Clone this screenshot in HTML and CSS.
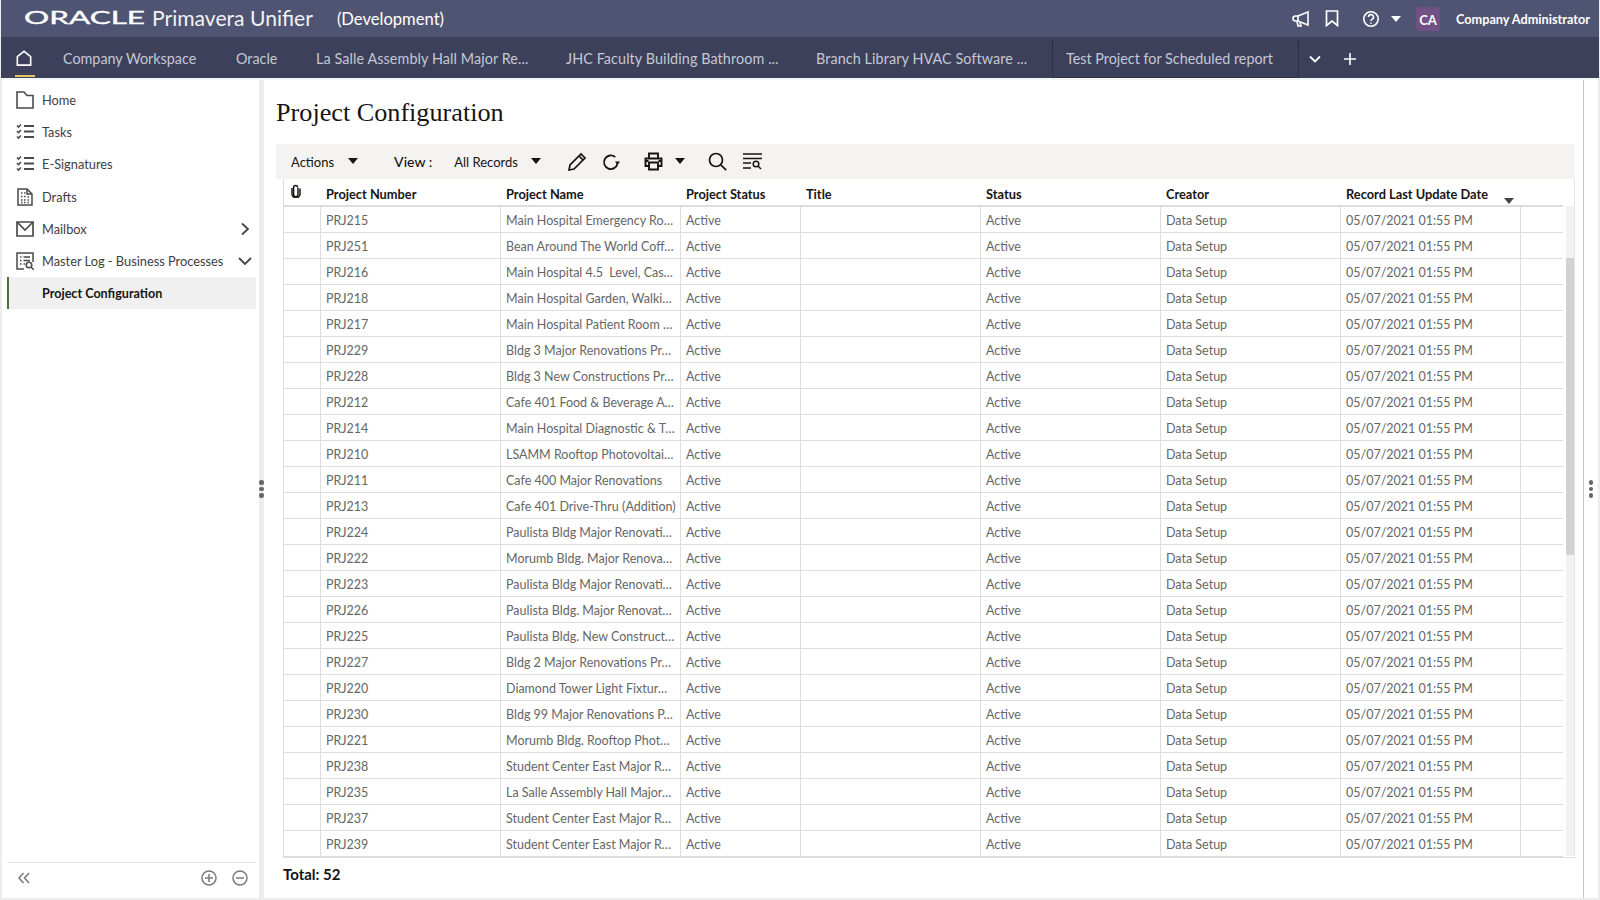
FILE: index.html
```html
<!DOCTYPE html>
<html lang="en">
<head>
<meta charset="utf-8">
<title>Project Configuration</title>
<link rel="stylesheet" href="styles.css">
</head>
<body>
<div class="app">
  <header class="topbar">
    <svg class="oracle" width="124" height="26" viewBox="0 0 124 26"><text x="0" y="19" textLength="121" lengthAdjust="spacingAndGlyphs" class="oracle-text">ORACLE</text></svg>
    <span class="product">Primavera Unifier</span>
    <span class="env">(Development)</span>
    <div class="top-actions">
      <svg class="ico-mega" width="18" height="18" viewBox="0 0 18 18" fill="none" stroke="#fff" stroke-width="1.6"><path d="M16 2v13L6 11H3.5a2.3 2.3 0 0 1 0-5H6z"/><path d="M6 6v5"/><path d="M5 11.5l1 4.5h3l-1-3.500"/></svg>
      <svg class="ico-mark" width="14" height="17" viewBox="0 0 14 17" fill="none" stroke="#fff" stroke-width="1.700"><path d="M1.500 1h11v14.500L7 11l-5.500 4.500z"/></svg>
      <svg class="ico-help" width="18" height="18" viewBox="0 0 18 18" fill="none" stroke="#fff" stroke-width="1.600"><circle cx="9" cy="9" r="7.200"/><path d="M6.500 7a2.500 2.400 0 1 1 3.700 2.100c-.9.500-1.200 1-1.200 2"/><path d="M9 12.400v1.400"/></svg>
      <span class="caret caret-white"></span>
      <span class="avatar">CA</span>
      <span class="username">Company Administrator</span>
    </div>
  </header>

  <nav class="tabs">
    <div class="home-tab">
      <svg width="16" height="16" viewBox="0 0 18 18" fill="none" stroke="#fff" stroke-width="1.800"><path d="M1.500 7.500L9 1.500l7.500 6V17h-15z"/></svg>
    </div>
    <div class="tab tab-w1">Company Workspace</div>
    <div class="tab tab-w2">Oracle</div>
    <div class="tab tab-w3">La Salle Assembly Hall Major Re...</div>
    <div class="tab tab-w3">JHC Faculty Building Bathroom ...</div>
    <div class="tab tab-w3">Branch Library HVAC Software ...</div>
    <div class="tab tab-w4 tab-active">Test Project for Scheduled report</div>
    <svg class="tab-more" width="12" height="8" viewBox="0 0 12 8" fill="none" stroke="#fff" stroke-width="1.800"><path d="M1 1.500l5 5 5-5"/></svg>
    <svg class="tab-add" width="14" height="14" viewBox="0 0 14 14" fill="none" stroke="#fff" stroke-width="1.600"><path d="M7 1v12M1 7h12"/></svg>
  </nav>

  <main class="main">
    <aside class="sidebar">
      <ul class="side-nav">
        <li class="side-item">
          <svg class="side-ico" width="18" height="18" viewBox="0 0 18 18" fill="none" stroke="#4a4a4a" stroke-width="1.600"><path d="M1 1h7l3 3.500h6V17H1z"/></svg>
          <span>Home</span>
        </li>
        <li class="side-item">
          <svg class="side-ico" width="18" height="18" viewBox="0 0 18 18" fill="none" stroke="#4a4a4a" stroke-width="1.600"><path d="M1 2.500l1.500 1.500L5 1.500M1 8l1.500 1.500L5 7M1 13.500L2.500 15 5 12.500"/><path d="M8 3h10M8 8.500h10M8 14h10" stroke-width="1.800"/></svg>
          <span>Tasks</span>
        </li>
        <li class="side-item">
          <svg class="side-ico" width="18" height="18" viewBox="0 0 18 18" fill="none" stroke="#4a4a4a" stroke-width="1.600"><path d="M1 2.500l1.500 1.500L5 1.500M1 8l1.500 1.500L5 7M1 13.500L2.500 15 5 12.500"/><path d="M8 3h10M8 8.500h10M8 14h10" stroke-width="1.800"/></svg>
          <span>E-Signatures</span>
        </li>
        <li class="side-item">
          <svg class="side-ico" width="18" height="18" viewBox="0 0 18 18" fill="none" stroke="#4a4a4a" stroke-width="1.500"><path d="M2 1h9l5 5v11H2z"/><path d="M11 1v5h5"/><path d="M5 5h1.500M8 5h1.500M5 8.500h1.500M8 8.500h1.500M11.500 9h1.500M5 12h1.500M8 12h1.500M11.500 12h1.500M5 14.500h1.500M8 14.500h1.500M11.500 14.500h1.500" stroke-width="1.300"/></svg>
          <span>Drafts</span>
        </li>
        <li class="side-item">
          <svg class="side-ico" width="18" height="18" viewBox="0 0 18 18" fill="none" stroke="#4a4a4a" stroke-width="1.700"><path d="M1 2h16v14H1z"/><path d="M1.500 2.500L9 10l7.500-7.500"/></svg>
          <span>Mailbox</span>
          <svg class="side-chev chev-right" width="10" height="14" viewBox="0 0 10 14" fill="none" stroke="#444" stroke-width="1.800"><path d="M2 1.500L8 7l-6 5.500"/></svg>
        </li>
        <li class="side-item">
          <svg class="side-ico" width="18" height="18" viewBox="0 0 18 18" fill="none" stroke="#4a4a4a" stroke-width="1.500"><path d="M8 17H1V1h16v9"/><path d="M4 5h1.500M7.500 5H14M4 8.500h1.500M7.500 8.500H14M4 12h1.500M7.500 12H9"/><circle cx="13" cy="13" r="2.800"/><path d="M15 15l3 3"/></svg>
          <span>Master Log - Business Processes</span>
          <svg class="side-chev chev-down" width="14" height="10" viewBox="0 0 14 10" fill="none" stroke="#444" stroke-width="1.800"><path d="M1 2l6 6 6-6"/></svg>
        </li>
        <li class="side-item side-selected"><span>Project Configuration</span></li>
      </ul>
      <div class="side-foot">
        <svg class="foot-collapse" width="12" height="12" viewBox="0 0 12 12" fill="none" stroke="#7a7a7a" stroke-width="1.600"><path d="M5.500 1L1 6l4.500 5M11 1L6.500 6l4.500 5"/></svg>
        <svg class="foot-plus" width="16" height="16" viewBox="0 0 16 16" fill="none" stroke="#7a7a7a" stroke-width="1.500"><circle cx="8" cy="8" r="7"/><path d="M8 4v8M4 8h8"/></svg>
        <svg class="foot-minus" width="16" height="16" viewBox="0 0 16 16" fill="none" stroke="#7a7a7a" stroke-width="1.500"><circle cx="8" cy="8" r="7"/><path d="M4 8h8"/></svg>
      </div>
    </aside>

    <div class="splitter"><i></i><i></i><i></i></div>

    <section class="panel">
      <h1 class="title">Project Configuration</h1>
      <div class="toolbar">
        <span class="tb-actions">Actions</span>
        <span class="caret caret-dark tb-caret1"></span>
        <span class="tb-view">View :</span>
        <span class="tb-records">All Records</span>
        <span class="caret caret-dark tb-caret2"></span>
        <svg class="tb-pencil" width="20" height="20" viewBox="0 0 20 20" fill="none" stroke="#161513" stroke-width="1.700"><path d="M2 18l1-5L14 2l4 4L7 17z"/><path d="M12 4l4 4"/></svg>
        <svg class="tb-refresh" width="19" height="18" viewBox="0 0 19 18" fill="none" stroke="#161513" stroke-width="1.800"><path d="M15.500 10.500A6.800 6.800 0 1 1 13.200 4"/><path d="M18 8.500h-5l2.500 3.500z" fill="#161513" stroke="none"/></svg>
        <svg class="tb-print" width="19" height="19" viewBox="0 0 19 19" fill="none" stroke="#161513" stroke-width="1.900"><path d="M5 6V1.500h9V6"/><path d="M5 14H1.500V6.500h16V14H14"/><path d="M5 10.500h9v7H5z"/><path d="M1.500 9h3M14.500 9h3"/></svg>
        <span class="caret caret-dark tb-caret3"></span>
        <svg class="tb-search" width="19" height="19" viewBox="0 0 19 19" fill="none" stroke="#161513" stroke-width="1.700"><circle cx="8" cy="8" r="6.500"/><path d="M12.800 12.800l5.400 5.400"/></svg>
        <svg class="tb-filter" width="19" height="17" viewBox="0 0 19 17" fill="none" stroke="#161513" stroke-width="1.500"><path d="M0 1h19M0 5.500h19M0 10h8M0 15h8"/><circle cx="13" cy="11" r="2.800"/><path d="M15 13l3 3"/></svg>
      </div>
      <div class="grid">
        <div class="grid-scroll">
          <table class="data">
            <colgroup>
              <col class="c-clip"><col class="c-wide"><col class="c-wide"><col class="c-status"><col class="c-wide"><col class="c-wide"><col class="c-wide"><col class="c-wide"><col class="c-end">
            </colgroup>
            <thead>
              <tr>
                <th class="clip-head"><svg width="10" height="14" viewBox="0 0 10 14" fill="none" stroke="#161513" stroke-width="1.500"><path d="M7 4v6.500a2.200 2.200 0 0 1-4.400 0V3.500a2 2 0 0 1 4 0"/><path d="M9 4.500v5.500a4 4 0 0 1-8 0V4"/></svg></th>
                <th>Project Number</th><th>Project Name</th><th>Project Status</th><th>Title</th><th>Status</th><th>Creator</th>
                <th class="sort-head">Record Last Update Date<span class="caret caret-sort"></span></th><th></th>
              </tr>
            </thead>
            <tbody>
              <tr><td></td><td>PRJ215</td><td>Main Hospital Emergency Ro…</td><td>Active</td><td></td><td>Active</td><td>Data Setup</td><td>05/07/2021 01:55 PM</td><td></td></tr>
              <tr><td></td><td>PRJ251</td><td>Bean Around The World Coff…</td><td>Active</td><td></td><td>Active</td><td>Data Setup</td><td>05/07/2021 01:55 PM</td><td></td></tr>
              <tr><td></td><td>PRJ216</td><td>Main Hospital 4.5 &nbsp;Level, Cas…</td><td>Active</td><td></td><td>Active</td><td>Data Setup</td><td>05/07/2021 01:55 PM</td><td></td></tr>
              <tr><td></td><td>PRJ218</td><td>Main Hospital Garden, Walki…</td><td>Active</td><td></td><td>Active</td><td>Data Setup</td><td>05/07/2021 01:55 PM</td><td></td></tr>
              <tr><td></td><td>PRJ217</td><td>Main Hospital Patient Room …</td><td>Active</td><td></td><td>Active</td><td>Data Setup</td><td>05/07/2021 01:55 PM</td><td></td></tr>
              <tr><td></td><td>PRJ229</td><td>Bldg 3 Major Renovations Pr…</td><td>Active</td><td></td><td>Active</td><td>Data Setup</td><td>05/07/2021 01:55 PM</td><td></td></tr>
              <tr><td></td><td>PRJ228</td><td>Bldg 3 New Constructions Pr…</td><td>Active</td><td></td><td>Active</td><td>Data Setup</td><td>05/07/2021 01:55 PM</td><td></td></tr>
              <tr><td></td><td>PRJ212</td><td>Cafe 401 Food &amp; Beverage A…</td><td>Active</td><td></td><td>Active</td><td>Data Setup</td><td>05/07/2021 01:55 PM</td><td></td></tr>
              <tr><td></td><td>PRJ214</td><td>Main Hospital Diagnostic &amp; T…</td><td>Active</td><td></td><td>Active</td><td>Data Setup</td><td>05/07/2021 01:55 PM</td><td></td></tr>
              <tr><td></td><td>PRJ210</td><td>LSAMM Rooftop Photovoltai…</td><td>Active</td><td></td><td>Active</td><td>Data Setup</td><td>05/07/2021 01:55 PM</td><td></td></tr>
              <tr><td></td><td>PRJ211</td><td>Cafe 400 Major Renovations</td><td>Active</td><td></td><td>Active</td><td>Data Setup</td><td>05/07/2021 01:55 PM</td><td></td></tr>
              <tr><td></td><td>PRJ213</td><td>Cafe 401 Drive-Thru (Addition)</td><td>Active</td><td></td><td>Active</td><td>Data Setup</td><td>05/07/2021 01:55 PM</td><td></td></tr>
              <tr><td></td><td>PRJ224</td><td>Paulista Bldg Major Renovati…</td><td>Active</td><td></td><td>Active</td><td>Data Setup</td><td>05/07/2021 01:55 PM</td><td></td></tr>
              <tr><td></td><td>PRJ222</td><td>Morumb Bldg. Major Renova…</td><td>Active</td><td></td><td>Active</td><td>Data Setup</td><td>05/07/2021 01:55 PM</td><td></td></tr>
              <tr><td></td><td>PRJ223</td><td>Paulista Bldg Major Renovati…</td><td>Active</td><td></td><td>Active</td><td>Data Setup</td><td>05/07/2021 01:55 PM</td><td></td></tr>
              <tr><td></td><td>PRJ226</td><td>Paulista Bldg. Major Renovat…</td><td>Active</td><td></td><td>Active</td><td>Data Setup</td><td>05/07/2021 01:55 PM</td><td></td></tr>
              <tr><td></td><td>PRJ225</td><td>Paulista Bldg. New Construct…</td><td>Active</td><td></td><td>Active</td><td>Data Setup</td><td>05/07/2021 01:55 PM</td><td></td></tr>
              <tr><td></td><td>PRJ227</td><td>Bldg 2 Major Renovations Pr…</td><td>Active</td><td></td><td>Active</td><td>Data Setup</td><td>05/07/2021 01:55 PM</td><td></td></tr>
              <tr><td></td><td>PRJ220</td><td>Diamond Tower Light Fixtur…</td><td>Active</td><td></td><td>Active</td><td>Data Setup</td><td>05/07/2021 01:55 PM</td><td></td></tr>
              <tr><td></td><td>PRJ230</td><td>Bldg 99 Major Renovations P…</td><td>Active</td><td></td><td>Active</td><td>Data Setup</td><td>05/07/2021 01:55 PM</td><td></td></tr>
              <tr><td></td><td>PRJ221</td><td>Morumb Bldg. Rooftop Phot…</td><td>Active</td><td></td><td>Active</td><td>Data Setup</td><td>05/07/2021 01:55 PM</td><td></td></tr>
              <tr><td></td><td>PRJ238</td><td>Student Center East Major R…</td><td>Active</td><td></td><td>Active</td><td>Data Setup</td><td>05/07/2021 01:55 PM</td><td></td></tr>
              <tr><td></td><td>PRJ235</td><td>La Salle Assembly Hall Major…</td><td>Active</td><td></td><td>Active</td><td>Data Setup</td><td>05/07/2021 01:55 PM</td><td></td></tr>
              <tr><td></td><td>PRJ237</td><td>Student Center East Major R…</td><td>Active</td><td></td><td>Active</td><td>Data Setup</td><td>05/07/2021 01:55 PM</td><td></td></tr>
              <tr><td></td><td>PRJ239</td><td>Student Center East Major R…</td><td>Active</td><td></td><td>Active</td><td>Data Setup</td><td>05/07/2021 01:55 PM</td><td></td></tr>
              <tr><td></td><td></td><td></td><td></td><td></td><td></td><td></td><td></td><td></td></tr>
            </tbody>
          </table>
        </div>
        <div class="scrollbar"><div class="thumb"></div></div>
      </div>
      <div class="total">Total: 52</div>
    </section>

    <div class="rail"><i></i><i></i><i></i></div>
  </main>
</div>
</body>
</html>
```

FILE: styles.css
```css
* { box-sizing: border-box; }
html, body { margin: 0; height: 100%; }
body {
  font-family: "Lato", "Liberation Sans", sans-serif;
  font-size: 13px;
  color: #161513;
  background: #ececec;
  overflow: hidden;
}
.app {
  width: 1600px;
  height: 900px;
  padding: 0 1px 2px;
  display: flex;
  flex-direction: column;
}

/* top bar */
.topbar {
  height: 37px;
  flex: none;
  background: #505473;
  color: #fff;
  display: flex;
  align-items: center;
  padding-left: 23px;
}
.oracle { flex: none; margin-top: -1px; }
.oracle-text {
  font-family: "Lato", sans-serif;
  font-size: 18px;
  font-weight: 400;
  fill: #fff;
  stroke: #fff;
  stroke-width: .35px;
}
.product {
  margin-left: 4px;
  margin-top: -2px;
  font-size: 21.1px;
  color: #f2f2f5;
}
.env {
  margin-left: 24px;
  font-size: 16.6px;
}
.top-actions {
  margin-left: auto;
  display: flex;
  align-items: center;
}
.ico-mark { margin-left: 15px; }
.ico-help { margin-left: 23px; }
.caret {
  display: inline-block;
  width: 0;
  height: 0;
  border-style: solid;
  border-color: transparent;
  border-width: 6px 5.5px 0;
  flex: none;
}
.caret-white { border-top-color: #fff; margin-left: 11px; }
.caret-dark { border-top-color: #161513; }
.avatar {
  width: 24px;
  height: 24px;
  margin-left: 15px;
  background: #6f5184;
  border-radius: 3px;
  font-weight: 700;
  font-size: 13px;
  line-height: 26px;
  text-align: center;
}
.username {
  margin-left: 16px;
  width: 143px;
  font-weight: 700;
  font-size: 12.7px;
  white-space: nowrap;
}

/* tabs */
.tabs {
  height: 41px;
  flex: none;
  background: #3c405b;
  color: #c5c8d4;
  display: flex;
  align-items: center;
  font-size: 14.35px;
}
.home-tab {
  width: 48px;
  height: 100%;
  padding: 13px 0 0 15px;
  position: relative;
}
.home-tab svg { display: block; }
.home-tab::after {
  content: "";
  position: absolute;
  left: 14px;
  bottom: 1px;
  width: 20px;
  height: 2px;
  background: #e6c464;
}
.tab {
  height: 100%;
  flex: none;
  padding: 3px 0 0 14px;
  line-height: 38px;
  white-space: nowrap;
  overflow: hidden;
}
.tab-w1 { width: 173px; }
.tab-w2 { width: 80px; }
.tab-w3 { width: 250px; letter-spacing: .1px; }
.tab-w4 { width: 247px; }
.tab-active {
  margin-top: 3px;
  height: 38px;
  line-height: 38px;
  padding-top: 0;
  border: 1px dotted #20222f;
  border-width: 0 1px 1px;
  padding-left: 13px;
}
.tab-more { margin-left: 10px; margin-top: 2px; }
.tab-add { margin-left: 22px; margin-top: 2px; }

/* main layout */
.main {
  flex: 1;
  min-height: 0;
  display: flex;
  padding: 0 1px 0 1px;
  border-top: 2px solid #f6f6f6;
}
.sidebar {
  width: 257px;
  flex: none;
  background: #fff;
  display: flex;
  flex-direction: column;
  padding-left: 5px;
  padding-right: 3px;
}
.side-nav {
  list-style: none;
  margin: 0;
  padding: 4px 0 0;
  flex: 1;
}
.side-item {
  height: 32.2px;
  padding-left: 9px;
  display: flex;
  align-items: center;
  gap: 8px;
  font-size: 12.8px;
  color: #3e3e3e;
}
.side-ico { flex: none; }
.side-chev { margin-left: auto; flex: none; }
.chev-right { margin-right: 6px; }
.chev-down { margin-right: 4px; }
.side-selected {
  background: #f0f0f0;
  border-left: 2px solid #4b7239;
  padding-left: 33px;
  font-size: 12.6px;
  font-weight: 700;
  color: #161513;
}
.side-foot {
  height: 36px;
  flex: none;
  border-top: 1px solid #e6e6e6;
  display: flex;
  align-items: center;
  padding: 0 0 6px 11px;
}
.foot-plus { margin-left: auto; }
.foot-minus { margin-left: 15px; margin-right: 8px; }

.splitter {
  width: 5px;
  flex: none;
  background: #ececec;
  display: flex;
  flex-direction: column;
  justify-content: center;
  align-items: center;
  gap: 2px;
}
.splitter i, .rail i {
  width: 4.5px;
  height: 4.5px;
  border-radius: 50%;
  background: #666;
  display: block;
}

.panel {
  width: 1320px;
  flex: none;
  background: #fff;
  border-right: 1px solid #c9c9c9;
  padding: 0 8px 0 12px;
  display: flex;
  flex-direction: column;
}
.title {
  margin: 0;
  height: 64px;
  padding-top: 17px;
  flex: none;
  font-family: "Liberation Serif", serif;
  font-size: 26.2px;
  font-weight: 400;
  line-height: 32px;
  color: #161513;
}

.toolbar {
  height: 35px;
  flex: none;
  background: #f4f3f1;
  display: flex;
  align-items: center;
  padding-left: 15px;
  font-size: 13px;
}
.tb-caret1 { margin-left: 14px; margin-bottom: 2px; }
.tb-view { margin-left: 36px; font-size: 14px; font-weight: 500; }
.tb-records { margin-left: 22px; }
.tb-caret2 { margin-left: 13px; margin-bottom: 2px; }
.tb-pencil { margin-left: 26px; }
.tb-refresh { margin-left: 15px; }
.tb-print { margin-left: 23px; }
.tb-caret3 { margin-left: 12px; margin-bottom: 2px; }
.tb-search { margin-left: 23px; }
.tb-filter { margin-left: 16px; }

.grid {
  height: 679px;
  flex: none;
  margin-left: 7px;
  border-left: 1px solid #ddd;
  border-right: 1px solid #e4e4e4;
  border-bottom: 1px solid #ddd;
  display: flex;
}
.grid-scroll {
  width: 1279px;
  flex: none;
  overflow: hidden;
}
.data {
  width: 1279px;
  table-layout: fixed;
  border-collapse: separate;
  border-spacing: 0;
}
.c-clip { width: 36px; }
.c-wide { width: 180px; }
.c-status { width: 120px; }
.c-end { width: 43px; }
.data th {
  height: 28px;
  padding: 4px 0 0 6px;
  text-align: left;
  font-weight: 700;
  font-size: 12.8px;
  color: #161513;
  border-bottom: 2px solid #ddd;
  white-space: nowrap;
}
.clip-head svg { display: block; margin: -7px 0 0 1px; }
.sort-head { position: relative; }
.caret-sort {
  position: absolute;
  left: 164px;
  top: 19px;
  border-top-color: #444;
}
.data td {
  height: 26px;
  padding: 1px 0 0 5px;
  border-bottom: 1px solid #ddd;
  border-left: 1px solid #ddd;
  color: #666;
  font-size: 12.5px;
  white-space: nowrap;
  overflow: hidden;
}
.data td:first-child { border-left: 0; }

.scrollbar {
  width: 8px;
  height: 650px;
  flex: none;
  margin: 27px 0 0 3px;
  background: #f2f2f2;
  padding-top: 52px;
}
.thumb { height: 297px; background: #d2d2d2; }

.total {
  flex: 1;
  margin-left: 7px;
  padding-top: 7px;
  font-size: 15px;
  font-weight: 700;
  color: #161513;
}

.rail {
  flex: 1;
  background: #fff;
  display: flex;
  flex-direction: column;
  justify-content: center;
  align-items: center;
  gap: 2px;
}
```
